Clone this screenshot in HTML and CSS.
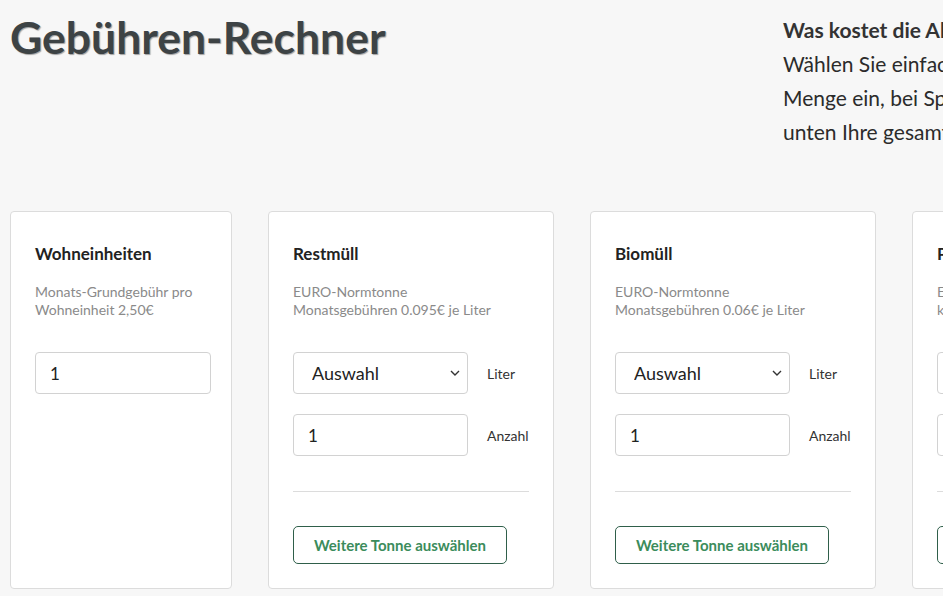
FILE: index.html
```html
<!DOCTYPE html>
<html>
 <head>
     <title>Gebühren-Rechner</title>
     <link rel="stylesheet" href="styles.css">
     <meta charset="UTF-8">
 </head>
 <body>
  <div class="seite">
    <div class="kopf">
      <h1 class="titel">Gebühren-Rechner</h1>
      <div class="intro">
        <b>Was kostet die Abfallentsorgung?</b><br>
        Wählen Sie einfach die Behältergröße und<br>
        Menge ein, bei Sperrmüll die Anzahl der Abholungen,<br>
        unten Ihre gesamten Gebühren werden berechnet.
      </div>
    </div>

    <div class="karten">
      <div class="karte karte_klein">
        <div class="k_titel">Wohneinheiten</div>
        <div class="k_text">Monats-Grundgebühr pro<br>Wohneinheit 2,50€</div>
        <div class="zeile">
          <input class="feld feld_breit" type="text" value="1">
        </div>
      </div>

      <div class="karte">
        <div class="k_titel">Restmüll</div>
        <div class="k_text">EURO-Normtonne<br>Monatsgebühren 0.095€ je Liter</div>
        <div class="zeile">
          <div class="auswahl">
            <select class="feld feld_select"><option>Auswahl</option></select>
            <svg class="pfeil" width="10" height="6" viewBox="0 0 10 6"><path d="M1 1l4 4 4-4" fill="none" stroke="#333" stroke-width="1.4"/></svg>
          </div>
          <span class="einheit">Liter</span>
        </div>
        <div class="zeile">
          <input class="feld" type="text" value="1">
          <span class="einheit">Anzahl</span>
        </div>
        <hr class="linie">
        <button class="bnt_weitere">Weitere Tonne auswählen</button>
      </div>

      <div class="karte">
        <div class="k_titel">Biomüll</div>
        <div class="k_text">EURO-Normtonne<br>Monatsgebühren 0.06€ je Liter</div>
        <div class="zeile">
          <div class="auswahl">
            <select class="feld feld_select"><option>Auswahl</option></select>
            <svg class="pfeil" width="10" height="6" viewBox="0 0 10 6"><path d="M1 1l4 4 4-4" fill="none" stroke="#333" stroke-width="1.4"/></svg>
          </div>
          <span class="einheit">Liter</span>
        </div>
        <div class="zeile">
          <input class="feld" type="text" value="1">
          <span class="einheit">Anzahl</span>
        </div>
        <hr class="linie">
        <button class="bnt_weitere">Weitere Tonne auswählen</button>
      </div>

      <div class="karte">
        <div class="k_titel">Papier</div>
        <div class="k_text">EURO-Normtonne<br>kostenfrei</div>
        <div class="zeile">
          <div class="auswahl">
            <select class="feld feld_select"><option>Auswahl</option></select>
            <svg class="pfeil" width="10" height="6" viewBox="0 0 10 6"><path d="M1 1l4 4 4-4" fill="none" stroke="#333" stroke-width="1.4"/></svg>
          </div>
          <span class="einheit">Liter</span>
        </div>
        <div class="zeile">
          <input class="feld" type="text" value="1">
          <span class="einheit">Anzahl</span>
        </div>
        <hr class="linie">
        <button class="bnt_weitere">Weitere Tonne auswählen</button>
      </div>
    </div>
  </div>
 </body>
</html>
```

FILE: styles.css
```css
html, body {margin:0; padding:0; background:#f7f7f7; overflow:hidden;}
body {font-family:Lato, "Noto Sans", sans-serif; color:#2b2b2b;}
.seite {width:1500px; padding:0 10px;}

.kopf {display:flex; align-items:flex-start;}
.titel {width:773px; flex:none; margin:0; padding-top:10px; font-size:44.5px; line-height:54px; font-weight:700; color:#3d4345; text-shadow:1px 1px 1px rgba(0,0,0,0.35);}
.intro {padding-top:13px; font-size:21px; line-height:34px; white-space:nowrap; color:#2b2b2b;}
.intro b {color:#333;}

.karten {display:flex; align-items:stretch; gap:36px; margin-top:62px;}
.karte {width:286px; box-sizing:border-box; flex:none; background:#fff; border:1px solid #dcdcdc; border-radius:4px; padding:31px 24px 24px;}
.karte_klein {width:222px;}
.k_titel {font-size:17px; font-weight:700; line-height:22px; color:#222;}
.k_text {margin-top:18px; font-size:14px; line-height:18px; color:#8a8a8a;}

.zeile {display:flex; align-items:center; gap:19px; margin-top:20px;}
.k_text + .zeile {margin-top:33px;}
.feld {width:175px; height:42px; box-sizing:border-box; flex:none; border:1px solid #d2d2d2; border-radius:4px; background:#fff; padding:0 14px; font-family:Lato, sans-serif; font-size:17px; color:#222;}
.feld_breit {width:176px;}
.auswahl {position:relative; flex:none;}
.feld_select {appearance:none; -webkit-appearance:none; padding:0 18px; font-size:18px; display:block;}
.pfeil {position:absolute; right:8px; top:18px;}
.einheit {font-size:14px; color:#333;}

.linie {border:0; border-top:1px solid #dcdcdc; margin:35px 0 0;}
.bnt_weitere {margin-top:34px; height:38px; width:214px; background:#fff; border:1px solid #2f5f4a; border-radius:5px; font-family:Lato, sans-serif; font-size:15px; font-weight:700; color:#3b8c5c;}
```
